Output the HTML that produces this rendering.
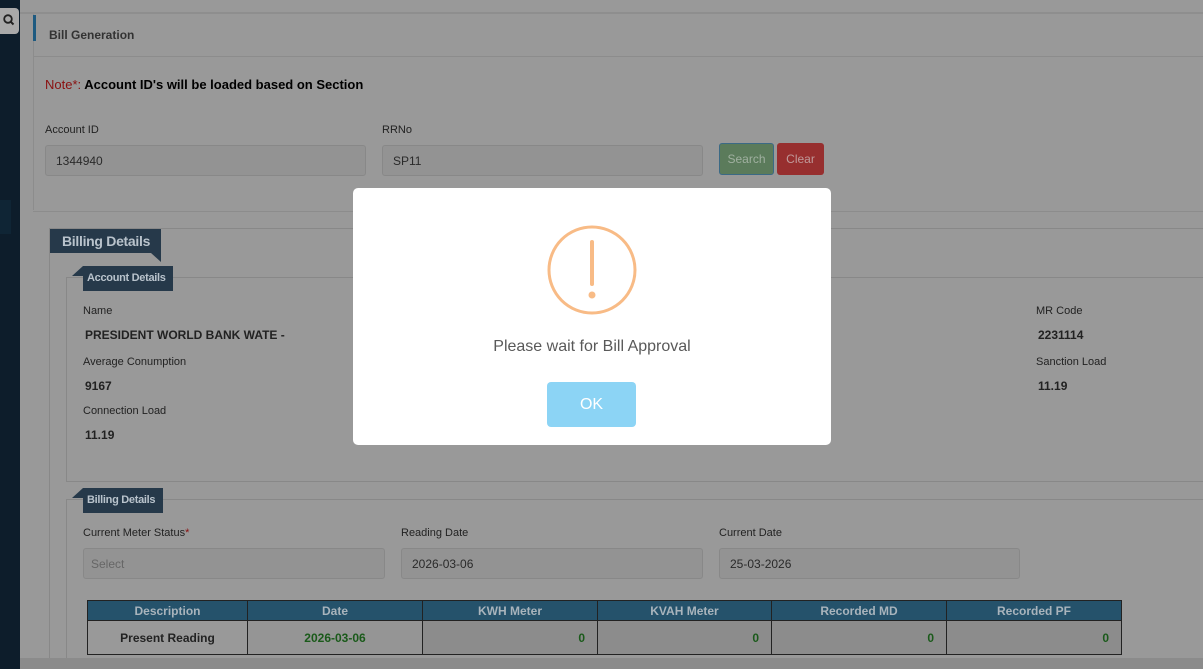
<!DOCTYPE html>
<html><head><meta charset="utf-8"><style>
*{box-sizing:border-box;margin:0;padding:0}
body{width:1203px;height:669px;overflow:hidden;background:#999;font-family:"Liberation Sans",sans-serif;position:relative;color:#1a1a1a}
.abs{position:absolute}
.lbl{font-size:11px;color:#222}
.inp{position:absolute;height:31px;background:#939393;border:1px solid #888;border-radius:3px;font-size:12px;color:#2a2a2a;padding:8px 10px}
.val{font-size:12px;font-weight:bold;color:#222}
.tag{position:absolute;background:#26394a;color:#b9c3cc;font-weight:bold;white-space:nowrap;letter-spacing:-0.3px}
th{background:#25526b;color:#a9b4bc;font-size:12px;font-weight:bold;height:20px;border:1px solid #222}
td{border:1px solid #222;height:34px;font-size:12px;font-weight:bold}
</style></head><body>
<div class="abs" style="left:0;top:0;width:20px;height:669px;background:#0d1d2b"></div>
<div class="abs" style="left:0;top:200px;width:11px;height:34px;background:#0f2535"></div>
<div class="abs" style="left:0;top:8px;width:19px;height:26px;background:#a9a9a9;border-radius:0 4px 4px 0">
<svg width="19" height="26" viewBox="0 0 19 26"><circle cx="8" cy="11" r="3.8" fill="none" stroke="#222" stroke-width="1.8"/><line x1="10.8" y1="13.8" x2="13.5" y2="16.5" stroke="#222" stroke-width="2"/></svg></div>
<div class="abs" style="left:20px;top:12px;width:1183px;height:2px;background:#8e8e8e"></div>
<div class="abs" style="left:33px;top:14px;width:1170px;height:196px;border-left:1px solid #8c8c8c"></div>
<div class="abs" style="left:33px;top:15px;width:3px;height:26px;background:#1e5a80"></div>
<div class="abs" style="left:49px;top:28px;font-size:12px;font-weight:bold;color:#333">Bill Generation</div>
<div class="abs" style="left:33px;top:56px;width:1170px;height:1px;background:#8c8c8c"></div>
<div class="abs" style="left:45px;top:77px;font-size:13px;font-weight:bold;color:#000"><span style="color:#8a1010;font-weight:normal">Note*:</span> Account ID's will be loaded based on Section</div>
<div class="abs lbl" style="left:45px;top:124px">Account ID</div>
<div class="inp" style="left:45px;top:145px;width:321px">1344940</div>
<div class="abs lbl" style="left:382px;top:124px">RRNo</div>
<div class="inp" style="left:382px;top:145px;width:321px">SP11</div>
<div class="abs" style="left:719px;top:143px;width:55px;height:32px;background:#5b7b5b;border:1px solid #3b6a85;border-radius:3px;color:#a0b0a0;font-size:12px;text-align:center;line-height:30px">Search</div>
<div class="abs" style="left:777px;top:143px;width:47px;height:32px;background:#972f2f;border-radius:3px;color:#c09a9a;font-size:12px;text-align:center;line-height:32px">Clear</div>
<div class="abs" style="left:33px;top:211px;width:1170px;height:1px;background:#8c8c8c"></div>
<div class="abs" style="left:49px;top:228px;width:1154px;height:440px;border:1px solid #888;border-right:none"></div>
<div class="abs" style="left:66px;top:277px;width:1137px;height:205px;border:1px solid #888;border-right:none"></div>
<div class="abs" style="left:66px;top:499px;width:1137px;height:170px;border:1px solid #888;border-right:none"></div>
<div class="tag" style="left:50px;top:229px;width:111px;height:24px;font-size:14px;padding:4px 12px">Billing Details</div>
<div class="abs" style="left:151px;top:253px;width:0;height:0;border-top:9px solid #26394a;border-left:10px solid transparent"></div>
<div class="tag" style="left:83px;top:266px;width:90px;height:25px;font-size:11px;padding:6px 4px">Account Details</div>
<div class="abs" style="left:72px;top:266px;border-bottom:10px solid #26394a;border-left:11px solid transparent"></div>
<div class="tag" style="left:83px;top:488px;width:80px;height:25px;font-size:11px;padding:6px 4px">Billing Details</div>
<div class="abs" style="left:72px;top:488px;border-bottom:10px solid #26394a;border-left:11px solid transparent"></div>
<div class="abs lbl" style="left:83px;top:305px">Name</div>
<div class="abs val" style="left:85px;top:328px">PRESIDENT WORLD BANK WATE -</div>
<div class="abs lbl" style="left:83px;top:356px">Average Conumption</div>
<div class="abs val" style="left:85px;top:379px">9167</div>
<div class="abs lbl" style="left:83px;top:405px">Connection Load</div>
<div class="abs val" style="left:85px;top:428px">11.19</div>
<div class="abs lbl" style="left:1036px;top:305px">MR Code</div>
<div class="abs val" style="left:1038px;top:328px">2231114</div>
<div class="abs lbl" style="left:1036px;top:356px">Sanction Load</div>
<div class="abs val" style="left:1038px;top:379px">11.19</div>
<div class="abs lbl" style="left:83px;top:527px">Current Meter Status<span style="color:#8a1010">*</span></div>
<div class="inp" style="left:83px;top:548px;width:302px;color:#666;padding-left:7px">Select</div>
<div class="abs lbl" style="left:401px;top:527px">Reading Date</div>
<div class="inp" style="left:401px;top:548px;width:302px">2026-03-06</div>
<div class="abs lbl" style="left:719px;top:527px">Current Date</div>
<div class="inp" style="left:719px;top:548px;width:301px">25-03-2026</div>
<table class="abs" style="left:87px;top:600px;width:1035px;border-collapse:collapse">
<tr><th style="width:160px">Description</th><th style="width:175px">Date</th><th style="width:175px">KWH Meter</th><th style="width:174px">KVAH Meter</th><th style="width:175px">Recorded MD</th><th>Recorded PF</th></tr>
<tr><td style="text-align:center;color:#222">Present Reading</td><td style="text-align:center;color:#1a5a1a;background:#959595">2026-03-06</td><td style="text-align:right;padding-right:12px;color:#1a5a1a;background:#8c8c8c">0</td><td style="text-align:right;padding-right:12px;color:#1a5a1a;background:#8c8c8c">0</td><td style="text-align:right;padding-right:12px;color:#1a5a1a;background:#8c8c8c">0</td><td style="text-align:right;padding-right:12px;color:#1a5a1a;background:#8c8c8c">0</td></tr>
</table>
<div class="abs" style="left:20px;top:658px;width:1183px;height:11px;background:#8b8b8b"></div>
<div class="abs" style="left:353px;top:188px;width:478px;height:257px;background:#fff;border-radius:5px">
<svg class="abs" style="left:193px;top:36px" width="92" height="92" viewBox="0 0 92 92"><circle cx="46" cy="46" r="43" fill="none" stroke="#f8bb86" stroke-width="3"/><line x1="46" y1="18" x2="46" y2="60" stroke="#f8bb86" stroke-width="4" stroke-linecap="round"/><circle cx="46" cy="71" r="3.5" fill="#f8bb86"/></svg>
<div class="abs" style="left:0;top:150px;width:478px;text-align:center;font-size:16px;color:#595959">Please wait for Bill Approval</div>
<div class="abs" style="left:194px;top:194px;width:89px;height:45px;background:#8cd4f5;border-radius:4px;color:#fff;font-size:16px;text-align:center;line-height:45px">OK</div>
</div>
</body></html>
